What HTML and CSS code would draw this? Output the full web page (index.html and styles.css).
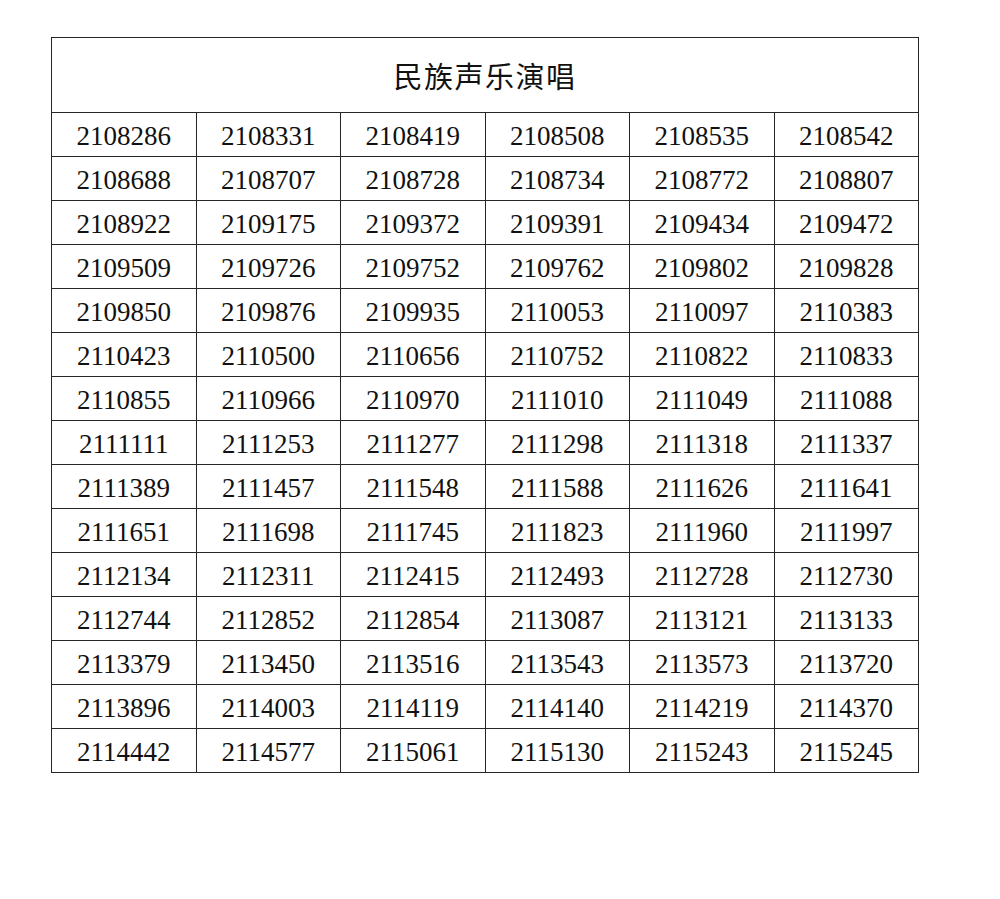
FILE: index.html
```html
<!DOCTYPE html>
<html lang="zh-CN">
<head>
<meta charset="utf-8">
<title>民族声乐演唱</title>
<link rel="stylesheet" href="styles.css">
</head>
<body>
<div class="page">
<table class="roster">
<thead>
<tr><th colspan="6" class="title">民族声乐演唱</th></tr>
</thead>
<tbody>
<tr><td>2108286</td><td>2108331</td><td>2108419</td><td>2108508</td><td>2108535</td><td>2108542</td></tr>
<tr><td>2108688</td><td>2108707</td><td>2108728</td><td>2108734</td><td>2108772</td><td>2108807</td></tr>
<tr><td>2108922</td><td>2109175</td><td>2109372</td><td>2109391</td><td>2109434</td><td>2109472</td></tr>
<tr><td>2109509</td><td>2109726</td><td>2109752</td><td>2109762</td><td>2109802</td><td>2109828</td></tr>
<tr><td>2109850</td><td>2109876</td><td>2109935</td><td>2110053</td><td>2110097</td><td>2110383</td></tr>
<tr><td>2110423</td><td>2110500</td><td>2110656</td><td>2110752</td><td>2110822</td><td>2110833</td></tr>
<tr><td>2110855</td><td>2110966</td><td>2110970</td><td>2111010</td><td>2111049</td><td>2111088</td></tr>
<tr><td>2111111</td><td>2111253</td><td>2111277</td><td>2111298</td><td>2111318</td><td>2111337</td></tr>
<tr><td>2111389</td><td>2111457</td><td>2111548</td><td>2111588</td><td>2111626</td><td>2111641</td></tr>
<tr><td>2111651</td><td>2111698</td><td>2111745</td><td>2111823</td><td>2111960</td><td>2111997</td></tr>
<tr><td>2112134</td><td>2112311</td><td>2112415</td><td>2112493</td><td>2112728</td><td>2112730</td></tr>
<tr><td>2112744</td><td>2112852</td><td>2112854</td><td>2113087</td><td>2113121</td><td>2113133</td></tr>
<tr><td>2113379</td><td>2113450</td><td>2113516</td><td>2113543</td><td>2113573</td><td>2113720</td></tr>
<tr><td>2113896</td><td>2114003</td><td>2114119</td><td>2114140</td><td>2114219</td><td>2114370</td></tr>
<tr><td>2114442</td><td>2114577</td><td>2115061</td><td>2115130</td><td>2115243</td><td>2115245</td></tr>
</tbody>
</table>
</div>
</body>
</html>
```
FILE: styles.css
```css
html, body {
  margin: 0;
  padding: 0;
  background: #ffffff;
}
.page {
  padding: 37px 0 0 51px;
}
.roster {
  border-collapse: collapse;
  table-layout: fixed;
  width: 868px;
  color: #111111;
}
.roster th,
.roster td {
  border: 1px solid #262626;
  padding: 0;
  text-align: center;
  vertical-align: middle;
}
.title {
  height: 74px;
  font-family: "Noto Sans CJK SC", sans-serif;
  font-weight: 400;
  font-size: 29px;
  letter-spacing: 1.5px;
  padding-top: 2px;
}
.roster td {
  height: 44px;
  font-family: "Liberation Serif", "Times New Roman", serif;
  font-size: 27px;
  line-height: 30px;
  padding-top: 3px;
  box-sizing: border-box;
}
```
